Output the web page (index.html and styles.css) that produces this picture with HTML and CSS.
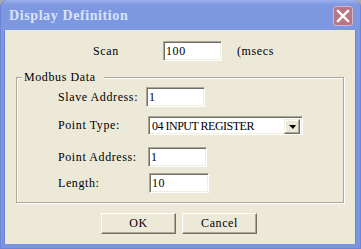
FILE: index.html
```html
<!DOCTYPE html>
<html>
	<head>
		<title>Display Definition</title>
		<link rel="stylesheet" href="styles.css">
	</head>
	<body>
		<div class="window">
			<div class="titlebar">
				<span class="title">Display Definition</span>
				<span class="close">
					<svg width="14" height="14" viewBox="0 0 14 14">
						<path d="M2 2 L12 12 M12 2 L2 12" stroke="#fff" stroke-width="2.4" stroke-linecap="square"/>
					</svg>
				</span>
			</div>
			<div class="client">
				<div class="scan-row">
					<span class="scan-label">Scan</span>
					<div class="edit w59">100</div>
					<span class="unit">(msecs</span>
				</div>

				<fieldset class="group">
					<legend>Modbus Data</legend>
					<div class="field f1">
						<span class="label">Slave Address:</span>
						<div class="edit w59">1</div>
					</div>
					<div class="field f2">
						<span class="label">Point Type:</span>
						<div class="combo">
							<span class="combo-text">04 INPUT REGISTER</span>
							<span class="combo-btn"><i class="arrow"></i></span>
						</div>
					</div>
					<div class="field f3">
						<span class="label">Point Address:</span>
						<div class="edit w59">1</div>
					</div>
					<div class="field f4">
						<span class="label">Length:</span>
						<div class="edit w60">10</div>
					</div>
				</fieldset>

				<div class="buttons">
					<div class="btn">OK</div>
					<div class="btn">Cancel</div>
				</div>
			</div>
		</div>
	</body>
</html>
```

FILE: styles.css
```css
body{
	margin: 0;
	background: #a9a9a9;
	font-family: "Liberation Serif", serif;
	font-size: 12px;
	letter-spacing: 0.6px;
	color: #000;
}
.window{
	width: 361px;
	height: 249px;
	box-sizing: border-box;
	padding: 0 5px 5px 4px;
	border-radius: 7px 7px 0 0;
	background: linear-gradient(#9cb1ee 0, #7d98e0 5px, #7a95df 100%);
	box-shadow: inset 1px 0 #6d85d4, inset -1px -1px #6d85d4;
	display: flex;
	flex-direction: column;
}
.titlebar{
	height: 30px;
	box-sizing: border-box;
	padding: 2px 3px 0 5px;
	display: flex;
	align-items: center;
	justify-content: space-between;
}
.title{
	font-size: 14px;
	font-weight: bold;
	letter-spacing: 0.6px;
	color: #d9e3f7;
}
.close{
	width: 20px;
	height: 20px;
	box-sizing: border-box;
	border: 1px solid #d7b6c3;
	border-radius: 3px;
	background: #b67684;
	display: flex;
	align-items: center;
	justify-content: center;
}
.client{
	flex: 1;
	background: #ece9d8;
	box-shadow: inset 1px 0 #6b83d2, inset -1px 0 #6b83d2;
}
.scan-row{
	margin-top: 11px;
	padding-left: 89px;
	height: 20px;
	display: flex;
	align-items: center;
}
.scan-label{
	width: 70px;
}
.unit{
	margin-left: 15px;
}
.edit{
	height: 20px;
	box-sizing: border-box;
	border: 1px solid;
	border-color: #aca899 #fff #fff #aca899;
	box-shadow: inset 1px 1px #716f64, inset -1px -1px #f1efe2;
	background: #fff;
	padding: 0 0 0 2px;
	line-height: 18px;
}
.w59{ width: 59px; }
.w60{ width: 60px; }
.group{
	margin: 9px 12px 0;
	padding: 3px 0 9px 0;
	border: 1px solid #aca899;
	box-shadow: inset 1px 1px #fff, 1px 1px #fff;
	min-width: 0;
}
.group legend{
	margin-left: 5px;
	padding: 0 8px 0 2px;
	line-height: 14px;
	background: #ece9d8;
}
.field{
	margin-left: 41px;
	display: flex;
	align-items: center;
	height: 20px;
}
.label{
	width: 88px;
}
.f2{
	margin-top: 9px;
	height: 19px;
}
.f2 .label,.f3 .label{ width: 90px; }
.f3{ margin-top: 12px; }
.f4{ margin-top: 6px; }
.f4 .label{ width: 91px; }
.combo{
	width: 155px;
	height: 19px;
	box-sizing: border-box;
	border: 1px solid;
	border-color: #aca899 #fff #fff #aca899;
	box-shadow: inset 1px 1px #716f64, inset -1px -1px #f1efe2;
	background: #fff;
	padding: 2px;
	display: flex;
}
.combo-text{
	flex: 1;
	line-height: 15px;
	padding-left: 1px;
	letter-spacing: -0.5px;
}
.combo-btn{
	width: 16px;
	height: 15px;
	box-sizing: border-box;
	background: #ece9d8;
	border: 1px solid;
	border-color: #f1efe2 #716f64 #716f64 #f1efe2;
	box-shadow: inset -1px -1px #aca899, inset 1px 1px #fff;
	display: flex;
	align-items: center;
	justify-content: center;
}
.arrow{
	width: 0;
	height: 0;
	border-left: 4px solid transparent;
	border-right: 3px solid transparent;
	border-top: 4px solid #000;
}
.buttons{
	margin-top: 10px;
	display: flex;
	justify-content: center;
	gap: 6px;
	padding-right: 2px;
}
.btn{
	width: 75px;
	height: 21px;
	box-sizing: border-box;
	border: 1px solid;
	border-color: #fff #716f64 #716f64 #fff;
	box-shadow: inset -1px -1px #aca899;
	background: #ece9d8;
	text-align: center;
	line-height: 19px;
}
```
